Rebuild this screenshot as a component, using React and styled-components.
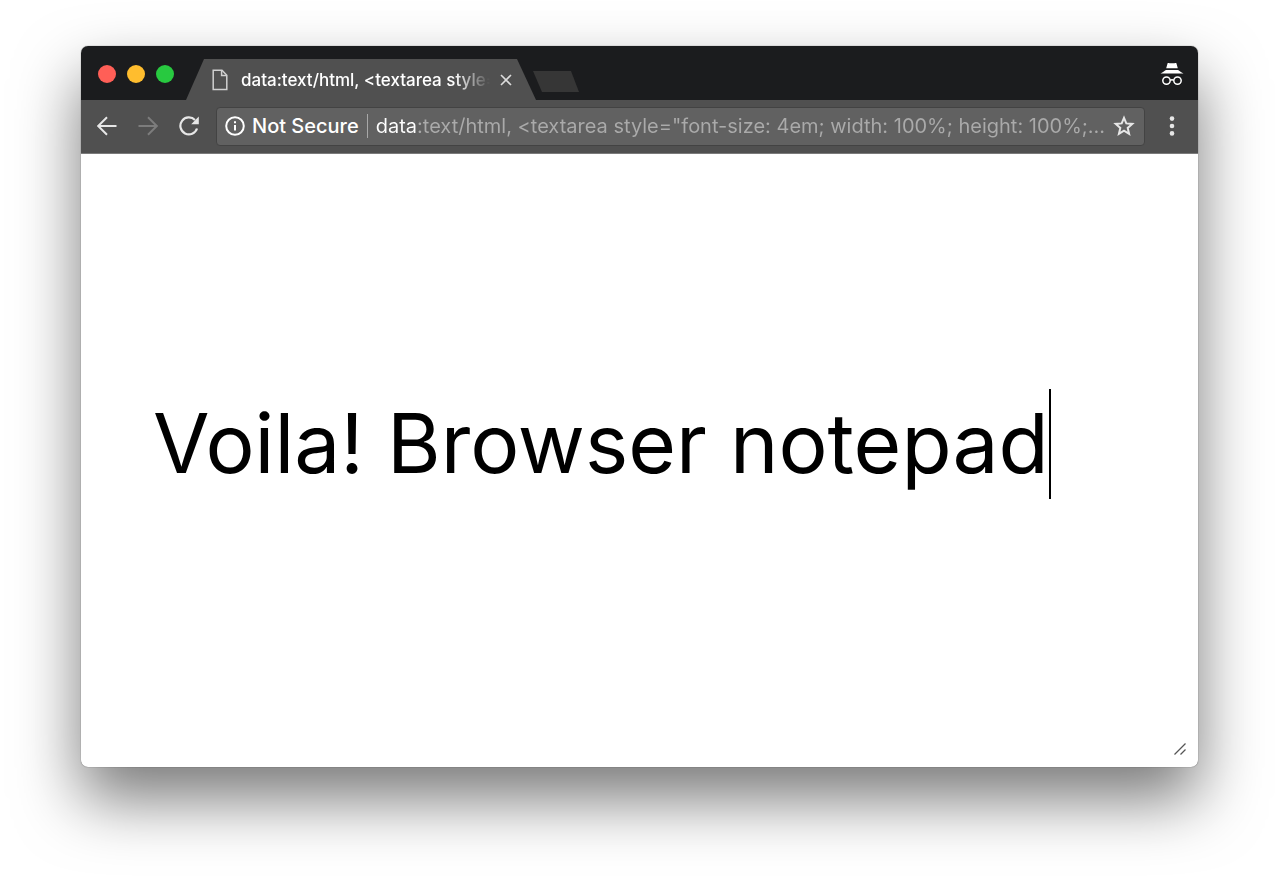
import {useState} from "react";
import styled, {createGlobalStyle} from "styled-components";

const GlobalStyle = createGlobalStyle`
  * {
    box-sizing: border-box;
  }
  body {
    margin: 0;
    background: #fff;
    font-family: Inter, "Liberation Sans", sans-serif;
  }
`;

const Desktop = styled.main`
  display: flex;
  min-height: 100vh;
  padding: 46px 82px 117px 81px;
`;

const BrowserWindow = styled.section`
  display: flex;
  flex: 1;
  flex-direction: column;
  min-width: 0;
  overflow: hidden;
  border-radius: 7px;
  background: #fff;
  box-shadow: 0 0 1px rgba(0, 0, 0, 0.7), 0 32px 64px rgba(0, 0, 0, 0.53);
`;

const TitleBar = styled.header`
  display: flex;
  align-items: flex-end;
  height: 54px;
  padding: 2px 14px 0 17px;
  background: #1b1c1e;
`;

const Lights = styled.div`
  display: flex;
  align-self: center;
  gap: 11px;
  margin-right: 12px;
`;

const Light = styled.button`
  width: 18px;
  height: 18px;
  padding: 0;
  border: 0;
  border-radius: 50%;
  background: ${props => props.$color};
`;

const Tab = styled.div`
  display: flex;
  align-items: center;
  width: 350px;
  height: 41px;
  padding: 0 24px 0 26px;
  background: #505050;
  clip-path: polygon(18px 0, calc(100% - 19px) 0, 100% 100%, 0 100%);
`;

const TabTitle = styled.span`
  flex: 1;
  min-width: 0;
  margin: 0 2px 0 13px;
  overflow: hidden;
  color: #fff;
  font-size: 17px;
  font-weight: 500;
  line-height: 24px;
  white-space: nowrap;
  mask-image: linear-gradient(to right, #000 calc(100% - 44px), transparent calc(100% - 8px));
`;

const NewTab = styled.button`
  width: 46px;
  height: 21px;
  margin: 0 auto 8px -3px;
  padding: 0;
  border: 0;
  background: #363636;
  clip-path: polygon(0 0, 38px 0, 100% 100%, 9px 100%);
`;

const Incognito = styled.div`
  display: flex;
  align-self: center;
`;

const Toolbar = styled.nav`
  display: flex;
  align-items: center;
  gap: 17px;
  height: 54px;
  padding: 0 16px 1px;
  border-bottom: 1px solid #7b7b7b;
  background: #505050;
`;

const NavButtons = styled.div`
  display: flex;
  gap: 21px;
`;

const IconButton = styled.button`
  display: flex;
  flex: none;
  align-items: center;
  justify-content: center;
  padding: 0;
  border: 0;
  background: none;
  color: #e6e6e6;
  &:disabled {
    color: #7c7c7c;
  }
`;

const AddressBar = styled.div`
  display: flex;
  flex: 1;
  align-items: center;
  min-width: 0;
  height: 39px;
  padding: 0 9px 0 8px;
  border: 1px solid #434343;
  border-radius: 4px;
  background: #616161;
`;

const Security = styled.button`
  display: flex;
  flex: none;
  align-items: center;
  gap: 7px;
  padding: 0;
  border: 0;
  background: none;
  color: #fff;
  font-family: inherit;
  font-size: 20px;
  font-weight: 500;
  line-height: 24px;
`;

const Divider = styled.span`
  flex: none;
  width: 1px;
  height: 24px;
  margin: 0 8px;
  background: #a8a8a8;
`;

/* the scheme is white, the rest of the address is dimmed */
const Address = styled.input`
  flex: 1;
  min-width: 0;
  margin-right: 4px;
  padding: 0;
  border: 0;
  outline: 0;
  background: linear-gradient(to right, #fff 42px, #aaa 42px);
  background-clip: text;
  color: transparent;
  caret-color: #fff;
  font-family: inherit;
  font-size: 20px;
  line-height: 24px;
  text-overflow: ellipsis;
`;

const Page = styled.div`
  display: flex;
  flex: 1;
  flex-direction: column;
  padding: 12px;
`;

const Line = styled.div`
  display: flex;
  flex: 1;
  align-items: center;
  padding: 0 60px 22px;
`;

const Notepad = styled.textarea`
  field-sizing: content;
  max-width: 100%;
  padding: 0;
  border: 0;
  outline: 0;
  overflow: hidden;
  resize: none;
  background: none;
  color: #000;
  caret-color: transparent;
  font-family: inherit;
  font-size: 82px;
  line-height: 110px;
`;

const Caret = styled.span`
  flex: none;
  width: 2px;
  height: 110px;
  background: #000;
`;

const Grip = styled.svg`
  align-self: flex-end;
`;

function FileIcon() {
    return (
        <svg width="16" height="22" viewBox="0 0 16 22" fill="none" stroke="#d0d0d0" strokeWidth="1.5">
            <path d="M1.2 1.2H10L14.8 6.2V20.4H1.2Z"/>
            <path d="M9.6 1.5V6.6H14.6"/>
        </svg>
    );
}

function CloseIcon() {
    return (
        <svg width="12" height="12" viewBox="0 0 12 12" stroke="#dcdcdc" strokeWidth="1.6">
            <path d="M1 1L11 11M11 1L1 11"/>
        </svg>
    );
}

function IncognitoIcon() {
    return (
        <svg width="24" height="24" viewBox="0 0 24 24" fill="#fff">
            <path d="M7.6 1.2C8.3 0.7 9 1.3 12 1.3S15.7 0.7 16.4 1.2L17.8 6.2H6.2Z"/>
            <path d="M0.5 11.6C3 10.2 5 8.5 6 8.1H18C19 8.5 21 10.2 23.5 11.6Z"/>
            <g fill="none" stroke="#fff" strokeWidth="1.5">
                <circle cx="6.5" cy="18.6" r="3.7"/>
                <circle cx="17.5" cy="18.6" r="3.7"/>
                <path d="M10.2 18.3Q12 17.3 13.8 18.3"/>
            </g>
        </svg>
    );
}

function ArrowIcon({flip}) {
    return (
        <svg width="20" height="20" viewBox="0 0 20 20" fill="none" stroke="currentColor" strokeWidth="2">
            <path d={flip ? "M0.5 10H18.5M10 1.2L18.8 10L10 18.8" : "M19.5 10H1.5M10 1.2L1.2 10L10 18.8"}/>
        </svg>
    );
}

function ReloadIcon() {
    return (
        <svg width="20" height="20" viewBox="0 0 20 20" fill="none">
            <path d="M18 12.5A8.5 8.5 0 1 1 16 4" stroke="currentColor" strokeWidth="2.2"/>
            <path d="M19.8 0.5V8.2H12.2Z" fill="currentColor"/>
        </svg>
    );
}

function InfoIcon() {
    return (
        <svg width="20" height="20" viewBox="0 0 20 20" fill="none" stroke="#fff" strokeWidth="2">
            <circle cx="10" cy="10" r="8.8"/>
            <path d="M10 9V14.5M10 5.2V7.3"/>
        </svg>
    );
}

function StarIcon() {
    return (
        <svg width="22" height="22" viewBox="0 0 22 22" fill="none" stroke="currentColor" strokeWidth="2">
            <path d="M11 2.8L13.3 8.4L19.3 8.9L14.7 12.9L16.1 18.9L11 15.7L5.9 18.9L7.3 12.9L2.7 8.9L8.7 8.4Z"/>
        </svg>
    );
}

function MenuIcon() {
    return (
        <svg width="20" height="20" viewBox="0 0 20 20" fill="currentColor">
            <circle cx="10" cy="2.6" r="2.3"/>
            <circle cx="10" cy="10" r="2.3"/>
            <circle cx="10" cy="17.4" r="2.3"/>
        </svg>
    );
}

function App() {
    const [text, setText] = useState("Voila! Browser notepad");
    const [address, setAddress] = useState('data:text/html, <textarea style="font-size: 4em; width: 100%; height: 100%;...');

    return (
        <Desktop>
            <GlobalStyle/>
            <BrowserWindow>
                <TitleBar>
                    <Lights>
                        <Light $color="#ff5f57" aria-label="Close window"/>
                        <Light $color="#ffbd2e" aria-label="Minimize window"/>
                        <Light $color="#28c940" aria-label="Zoom window"/>
                    </Lights>
                    <Tab>
                        <FileIcon/>
                        <TabTitle>{'data:text/html, <textarea style='}</TabTitle>
                        <IconButton aria-label="Close tab"><CloseIcon/></IconButton>
                    </Tab>
                    <NewTab aria-label="New tab"/>
                    <Incognito><IncognitoIcon/></Incognito>
                </TitleBar>
                <Toolbar>
                    <NavButtons>
                        <IconButton aria-label="Back"><ArrowIcon/></IconButton>
                        <IconButton aria-label="Forward" disabled><ArrowIcon flip/></IconButton>
                        <IconButton aria-label="Reload"><ReloadIcon/></IconButton>
                    </NavButtons>
                    <AddressBar>
                        <Security><InfoIcon/>Not Secure</Security>
                        <Divider/>
                        <Address
                            aria-label="Address"
                            spellCheck={false}
                            value={address}
                            onChange={e => setAddress(e.target.value)}
                        />
                        <IconButton aria-label="Bookmark"><StarIcon/></IconButton>
                    </AddressBar>
                    <IconButton aria-label="Menu"><MenuIcon/></IconButton>
                </Toolbar>
                <Page>
                    <Line>
                        <Notepad
                            aria-label="Notepad"
                            rows={1}
                            spellCheck={false}
                            value={text}
                            onChange={e => setText(e.target.value)}
                        />
                        <Caret/>
                    </Line>
                    <Grip width="12" height="12" viewBox="0 0 12 12" stroke="#555" strokeWidth="1.3">
                        <path d="M0.5 11.5L11.5 0.5M6.5 11.5L11.5 6.5"/>
                    </Grip>
                </Page>
            </BrowserWindow>
        </Desktop>
    );
}

export default App
